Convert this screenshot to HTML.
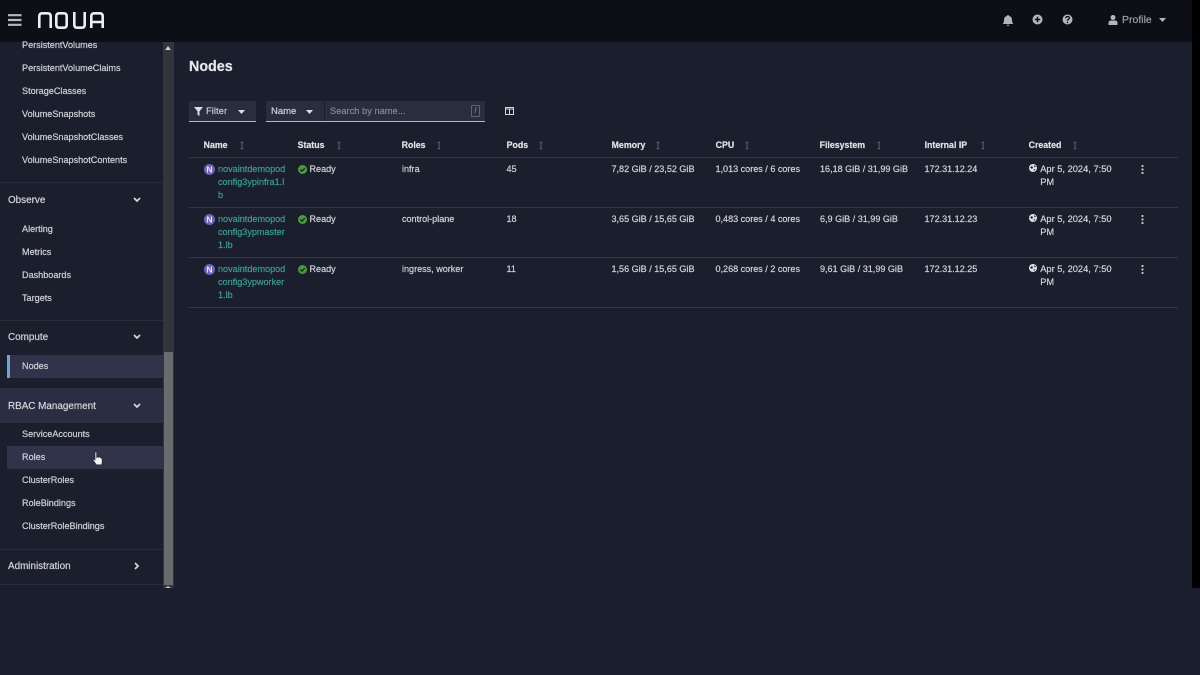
<!DOCTYPE html>
<html><head><meta charset="utf-8"><title>Nodes</title>
<style>
html,body{margin:0;padding:0;width:1200px;height:675px;overflow:hidden;background:#1b1e2d}
#r{position:absolute;left:0;top:0;width:1200px;height:675px;filter:blur(.35px)}
body{font-family:"Liberation Sans",sans-serif;color:#d8d9de;font-size:9.5px}
.a{position:absolute;white-space:nowrap}
.t{position:absolute;white-space:nowrap;line-height:13px;height:13px;-webkit-text-stroke:.2px currentColor}
.b{font-weight:bold}
.s{color:#cfd0d7;font-size:9.1px}
.h{color:#d4d5dc;font-size:9.9px}
.th{font-weight:bold;color:#e0e1e6;font-size:8.8px;margin-left:-.4px}
.l{color:#3c9c95;font-size:9.1px}
.d{color:#d2d3d9;font-size:9.05px;margin-left:-.5px}
.dt{font-size:9.3px;margin-left:-.8px}
.line{position:absolute;height:1px;background:#33363f}
svg{position:absolute;display:block}
</style></head><body><div id="r">
<div class="a" style="left:0;top:0;width:1192px;height:42px;background:#0e0f16"></div>
<div class="a" style="left:1192px;top:0;width:8px;height:588px;background:#000"></div>

<!-- header -->
<svg style="left:8px;top:14px" width="14" height="12" viewBox="0 0 14 12"><path d="M0 1.200h13.500M0 6h13.500M0 10.800h13.500" stroke="#b9bac0" stroke-width="2.200"/></svg>
<svg style="left:37px;top:11px" width="68" height="18" viewBox="0 0 68 18" fill="none" stroke="#eceded" stroke-width="2.600"><path d="M2.300 17V5.300q0-3 3-3h5.400q3 0 3 3V17"/><path d="M19.300 5.300q0-3 3-3h4.400q3 0 3 3v8.400q0 3-3 3h-4.400q-3 0-3-3z"/><path d="M37.300 1v12.700q0 3 3 3h4.400q3 0 3-3V1"/><path d="M54.300 17V5.300q0-3 3-3h5.400q3 0 3 3V17M54.300 11h11.400"/></svg>
<svg style="left:1003px;top:15px" width="10" height="11" viewBox="0 0 10 11"><path d="M5 0q1 0 1 1q3 .6 3 4q0 2.500 1 3.500v.5H0v-.5q1-1 1-3.500q0-3.400 3-4q0-1 1-1zM3.800 9.800h2.400q0 1.200-1.200 1.200t-1.200-1.200z" fill="#b4b5ba"/></svg>
<svg style="left:1032px;top:14px" width="11" height="11" viewBox="0 0 11 11"><circle cx="5.500" cy="5.500" r="5" fill="#b4b5ba"/><path d="M5.500 2.800v5.400M2.800 5.500h5.400" stroke="#0e0f16" stroke-width="1.500"/></svg>
<svg style="left:1062px;top:14px" width="11" height="11" viewBox="0 0 11 11"><circle cx="5.500" cy="5.500" r="5" fill="#b4b5ba"/><path d="M3.800 4.200q0-1.700 1.800-1.700t1.700 1.500q0 1-1 1.500t-.8 1.200" fill="none" stroke="#0e0f16" stroke-width="1.300"/><circle cx="5.500" cy="8.300" r=".8" fill="#0e0f16"/></svg>
<svg style="left:1108px;top:15px" width="10" height="10" viewBox="0 0 10 10"><circle cx="5" cy="2.500" r="2.500" fill="#b4b5ba"/><path d="M.5 10V8q0-2.500 2.500-2.500h4q2.500 0 2.500 2.500v2z" fill="#b4b5ba"/></svg>
<div class="t" style="left:1122px;top:14px;color:#9d9ea4;font-size:10.500px">Profile</div>
<svg style="left:1159px;top:18px" width="7" height="4"><path d="M0 0h7L3.500 4z" fill="#b4b5ba"/></svg>

<!-- sidebar -->
<div class="a" style="left:7px;top:355px;width:156px;height:23px;background:#31334a"></div>
<div class="a" style="left:7px;top:355px;width:3px;height:23px;background:#6aa6dc"></div>
<div class="a" style="left:0;top:388px;width:163px;height:35px;background:#2b2d42"></div>
<div class="a" style="left:7px;top:446px;width:156px;height:23px;background:#31334a"></div>

<div class="t s" style="left:22px;top:39px">PersistentVolumes</div>
<div class="t s" style="left:22px;top:62px">PersistentVolumeClaims</div>
<div class="t s" style="left:22px;top:85px">StorageClasses</div>
<div class="t s" style="left:22px;top:108px">VolumeSnapshots</div>
<div class="t s" style="left:22px;top:131px">VolumeSnapshotClasses</div>
<div class="t s" style="left:22px;top:154px">VolumeSnapshotContents</div>
<div class="line" style="left:0;top:182px;width:163px;background:#2a2c3a"></div>
<div class="t h" style="left:8px;top:194px">Observe</div>
<div class="t s" style="left:22px;top:223px">Alerting</div>
<div class="t s" style="left:22px;top:246px">Metrics</div>
<div class="t s" style="left:22px;top:269px">Dashboards</div>
<div class="t s" style="left:22px;top:292px">Targets</div>
<div class="line" style="left:0;top:320px;width:163px;background:#2a2c3a"></div>
<div class="t h" style="left:8px;top:331px">Compute</div>
<div class="t s" style="left:22px;top:360px">Nodes</div>
<div class="t h" style="left:8px;top:400px">RBAC Management</div>
<div class="t s" style="left:22px;top:428px">ServiceAccounts</div>
<div class="t s" style="left:22px;top:451px">Roles</div>
<div class="t s" style="left:22px;top:474px">ClusterRoles</div>
<div class="t s" style="left:22px;top:497px">RoleBindings</div>
<div class="t s" style="left:22px;top:520px">ClusterRoleBindings</div>
<div class="line" style="left:0;top:549px;width:163px;background:#2a2c3a"></div>
<div class="t h" style="left:8px;top:560px">Administration</div>
<div class="line" style="left:0;top:584px;width:163px;background:#2a2c3a"></div>
<svg style="left:133px;top:197px" width="8" height="6"><path d="M1 1l3 3 3-3" fill="none" stroke="#d6d7dc" stroke-width="1.700"/></svg>
<svg style="left:133px;top:334px" width="8" height="6"><path d="M1 1l3 3 3-3" fill="none" stroke="#d6d7dc" stroke-width="1.700"/></svg>
<svg style="left:133px;top:403px" width="8" height="6"><path d="M1 1l3 3 3-3" fill="none" stroke="#d6d7dc" stroke-width="1.700"/></svg>
<svg style="left:134px;top:562px" width="6" height="8"><path d="M1 1l3 3-3 3" fill="none" stroke="#d6d7dc" stroke-width="1.700"/></svg>

<!-- scrollbar -->
<div class="a" style="left:163px;top:42px;width:11px;height:546px;background:#33353c"></div>
<div class="a" style="left:164px;top:352px;width:9px;height:233px;background:#6b6b6d"></div>
<svg style="left:165px;top:46px" width="6" height="4"><path d="M0 4h6L3 0z" fill="#d0d0d0"/></svg>
<svg style="left:165px;top:586px" width="6" height="2"><path d="M0 2h6L3 0z" fill="#bbb"/></svg>

<!-- cursor -->
<svg style="left:92px;top:451px" width="12" height="16" viewBox="0 0 12 16"><path d="M3 1.200q1-.8 1.700 0V6.500l.4-.5q1-.5 1.500.3.900-.6 1.500.2.900-.4 1.400.5l.6 1.200q.4 3-.4 5.600H4.300L1.200 9.300q-.3-1 .8-1.200l1 .8z" fill="#f4f4f4" stroke="#222" stroke-width=".7"/></svg>

<!-- main -->
<div class="t b" style="left:189px;top:58px;font-size:14.300px;height:18px;line-height:18px;color:#e8e9ec">Nodes</div>

<div class="a" style="left:189px;top:101px;width:67px;height:20px;background:#2a2c3f;border-bottom:1px solid #b8b9c0"></div>
<svg style="left:194px;top:107px" width="9" height="9" viewBox="0 0 9 9"><path d="M0 0h9L5.500 4.200V9L3.500 7.800V4.200z" fill="#dcdde0"/></svg>
<div class="t" style="left:206px;top:105px;color:#c6c7cd;font-size:9.500px">Filter</div>
<svg style="left:238px;top:110px" width="7" height="4"><path d="M0 0h7L3.500 4z" fill="#dcdde0"/></svg>

<div class="a" style="left:266px;top:101px;width:219px;height:20px;background:#2a2c3f;border-bottom:1px solid #b8b9c0"></div>
<div class="t" style="left:271px;top:105px;color:#d0d1d6;font-size:9.500px">Name</div>
<svg style="left:306px;top:110px" width="7" height="4"><path d="M0 0h7L3.500 4z" fill="#dcdde0"/></svg>
<div class="a" style="left:324px;top:101px;width:1px;height:20px;background:#1b1e2d"></div>
<div class="t" style="left:330px;top:105px;color:#85868f;font-size:9.300px">Search by name...</div>
<div class="a" style="left:471px;top:105px;width:9px;height:12px;border:1px solid #62636d;border-radius:1px;box-sizing:border-box;color:#9a9ba3;font-size:8px;line-height:10px;text-align:center">/</div>
<svg style="left:505px;top:107px" width="9" height="8" viewBox="0 0 9 8"><path d="M.5.500h8v7h-8zM4.500 2v5.500M.5 2h8" fill="none" stroke="#d6d7dc"/></svg>

<!-- table head -->
<div class="t th" style="left:204px;top:139px">Name</div>
<div class="t th" style="left:298px;top:139px">Status</div>
<div class="t th" style="left:402px;top:139px">Roles</div>
<div class="t th" style="left:507px;top:139px">Pods</div>
<div class="t th" style="left:612px;top:139px">Memory</div>
<div class="t th" style="left:716px;top:139px">CPU</div>
<div class="t th" style="left:820px;top:139px">Filesystem</div>
<div class="t th" style="left:925px;top:139px">Internal IP</div>
<div class="t th" style="left:1029px;top:139px">Created</div>
<svg style="left:240px;top:141px" width="4" height="9"><path d="M2 .5v8M.7 1.500h2.600M.7 7.500h2.600" stroke="#5c5e68"/></svg>
<svg style="left:337px;top:141px" width="4" height="9"><path d="M2 .5v8M.7 1.500h2.600M.7 7.500h2.600" stroke="#5c5e68"/></svg>
<svg style="left:437px;top:141px" width="4" height="9"><path d="M2 .5v8M.7 1.500h2.600M.7 7.500h2.600" stroke="#5c5e68"/></svg>
<svg style="left:539px;top:141px" width="4" height="9"><path d="M2 .5v8M.7 1.500h2.600M.7 7.500h2.600" stroke="#5c5e68"/></svg>
<svg style="left:656px;top:141px" width="4" height="9"><path d="M2 .5v8M.7 1.500h2.600M.7 7.500h2.600" stroke="#5c5e68"/></svg>
<svg style="left:745px;top:141px" width="4" height="9"><path d="M2 .5v8M.7 1.500h2.600M.7 7.500h2.600" stroke="#5c5e68"/></svg>
<svg style="left:877px;top:141px" width="4" height="9"><path d="M2 .5v8M.7 1.500h2.600M.7 7.500h2.600" stroke="#5c5e68"/></svg>
<svg style="left:981px;top:141px" width="4" height="9"><path d="M2 .5v8M.7 1.500h2.600M.7 7.500h2.600" stroke="#5c5e68"/></svg>
<svg style="left:1073px;top:141px" width="4" height="9"><path d="M2 .5v8M.7 1.500h2.600M.7 7.500h2.600" stroke="#5c5e68"/></svg>

<div class="line" style="left:189px;top:157px;width:989px"></div>
<div class="line" style="left:189px;top:207px;width:989px"></div>
<div class="line" style="left:189px;top:257px;width:989px"></div>
<div class="line" style="left:189px;top:307px;width:989px"></div>

<!-- row 1 -->
<svg style="left:204px;top:164px" width="11" height="11"><circle cx="5.500" cy="5.500" r="5.500" fill="#6d62b5"/><text x="5.500" y="8.500" text-anchor="middle" font-family="Liberation Sans" font-size="8.500" font-weight="bold" fill="#e8e6f4">N</text></svg>
<div class="t l" style="left:218px;top:163px">novaintdemopod</div>
<div class="t l" style="left:218px;top:176px">config3ypinfra1.l</div>
<div class="t l" style="left:218px;top:189px">b</div>
<svg style="left:298px;top:165px" width="9" height="9" viewBox="0 0 9 9"><circle cx="4.500" cy="4.500" r="4.500" fill="#4a9a3f"/><path d="M2.300 4.600l1.600 1.600 2.900-3" fill="none" stroke="#10200f" stroke-width="1.200"/></svg>
<div class="t d" style="left:310px;top:163px">Ready</div>
<div class="t d" style="left:402.500px;top:163px">infra</div>
<div class="t d" style="left:507px;top:163px">45</div>
<div class="t d" style="left:612px;top:163px">7,82 GiB / 23,52 GiB</div>
<div class="t d" style="left:716px;top:163px">1,013 cores / 6 cores</div>
<div class="t d" style="left:820.500px;top:163px">16,18 GiB / 31,99 GiB</div>
<div class="t d" style="left:925px;top:163px">172.31.12.24</div>
<svg style="left:1029px;top:164px" width="8" height="8" viewBox="0 0 8 8"><circle cx="4" cy="4" r="4" fill="#e0e1e5"/><path d="M1 3.500l2-1.500 1 1.500-1 1.500zM5 1l2 1.500-1.500 1zM4.500 5.500l2-.5-1.500 2z" fill="#1b1e2d"/></svg>
<div class="t d dt" style="left:1041px;top:163px">Apr 5, 2024, 7:50</div>
<div class="t d dt" style="left:1041px;top:176px">PM</div>
<svg style="left:1141px;top:165px" width="3" height="9"><circle cx="1.500" cy="1" r="1.100" fill="#c8c9cf"/><circle cx="1.500" cy="4.500" r="1.100" fill="#c8c9cf"/><circle cx="1.500" cy="8" r="1.100" fill="#c8c9cf"/></svg>

<!-- row 2 -->
<svg style="left:204px;top:214px" width="11" height="11"><circle cx="5.500" cy="5.500" r="5.500" fill="#6d62b5"/><text x="5.500" y="8.500" text-anchor="middle" font-family="Liberation Sans" font-size="8.500" font-weight="bold" fill="#e8e6f4">N</text></svg>
<div class="t l" style="left:218px;top:213px">novaintdemopod</div>
<div class="t l" style="left:218px;top:226px">config3ypmaster</div>
<div class="t l" style="left:218px;top:239px">1.lb</div>
<svg style="left:298px;top:215px" width="9" height="9" viewBox="0 0 9 9"><circle cx="4.500" cy="4.500" r="4.500" fill="#4a9a3f"/><path d="M2.300 4.600l1.600 1.600 2.900-3" fill="none" stroke="#10200f" stroke-width="1.200"/></svg>
<div class="t d" style="left:310px;top:213px">Ready</div>
<div class="t d" style="left:402.500px;top:213px">control-plane</div>
<div class="t d" style="left:507px;top:213px">18</div>
<div class="t d" style="left:612px;top:213px">3,65 GiB / 15,65 GiB</div>
<div class="t d" style="left:716px;top:213px">0,483 cores / 4 cores</div>
<div class="t d" style="left:820.500px;top:213px">6,9 GiB / 31,99 GiB</div>
<div class="t d" style="left:925px;top:213px">172.31.12.23</div>
<svg style="left:1029px;top:214px" width="8" height="8" viewBox="0 0 8 8"><circle cx="4" cy="4" r="4" fill="#e0e1e5"/><path d="M1 3.500l2-1.500 1 1.500-1 1.500zM5 1l2 1.500-1.500 1zM4.500 5.500l2-.5-1.500 2z" fill="#1b1e2d"/></svg>
<div class="t d dt" style="left:1041px;top:213px">Apr 5, 2024, 7:50</div>
<div class="t d dt" style="left:1041px;top:226px">PM</div>
<svg style="left:1141px;top:215px" width="3" height="9"><circle cx="1.500" cy="1" r="1.100" fill="#c8c9cf"/><circle cx="1.500" cy="4.500" r="1.100" fill="#c8c9cf"/><circle cx="1.500" cy="8" r="1.100" fill="#c8c9cf"/></svg>

<!-- row 3 -->
<svg style="left:204px;top:264px" width="11" height="11"><circle cx="5.500" cy="5.500" r="5.500" fill="#6d62b5"/><text x="5.500" y="8.500" text-anchor="middle" font-family="Liberation Sans" font-size="8.500" font-weight="bold" fill="#e8e6f4">N</text></svg>
<div class="t l" style="left:218px;top:263px">novaintdemopod</div>
<div class="t l" style="left:218px;top:276px">config3ypworker</div>
<div class="t l" style="left:218px;top:289px">1.lb</div>
<svg style="left:298px;top:265px" width="9" height="9" viewBox="0 0 9 9"><circle cx="4.500" cy="4.500" r="4.500" fill="#4a9a3f"/><path d="M2.300 4.600l1.600 1.600 2.900-3" fill="none" stroke="#10200f" stroke-width="1.200"/></svg>
<div class="t d" style="left:310px;top:263px">Ready</div>
<div class="t d" style="left:402.500px;top:263px">ingress, worker</div>
<div class="t d" style="left:507px;top:263px">11</div>
<div class="t d" style="left:612px;top:263px">1,56 GiB / 15,65 GiB</div>
<div class="t d" style="left:716px;top:263px">0,268 cores / 2 cores</div>
<div class="t d" style="left:820.500px;top:263px">9,61 GiB / 31,99 GiB</div>
<div class="t d" style="left:925px;top:263px">172.31.12.25</div>
<svg style="left:1029px;top:264px" width="8" height="8" viewBox="0 0 8 8"><circle cx="4" cy="4" r="4" fill="#e0e1e5"/><path d="M1 3.500l2-1.500 1 1.500-1 1.500zM5 1l2 1.500-1.500 1zM4.500 5.500l2-.5-1.500 2z" fill="#1b1e2d"/></svg>
<div class="t d dt" style="left:1041px;top:263px">Apr 5, 2024, 7:50</div>
<div class="t d dt" style="left:1041px;top:276px">PM</div>
<svg style="left:1141px;top:265px" width="3" height="9"><circle cx="1.500" cy="1" r="1.100" fill="#c8c9cf"/><circle cx="1.500" cy="4.500" r="1.100" fill="#c8c9cf"/><circle cx="1.500" cy="8" r="1.100" fill="#c8c9cf"/></svg>
</div></body></html>
